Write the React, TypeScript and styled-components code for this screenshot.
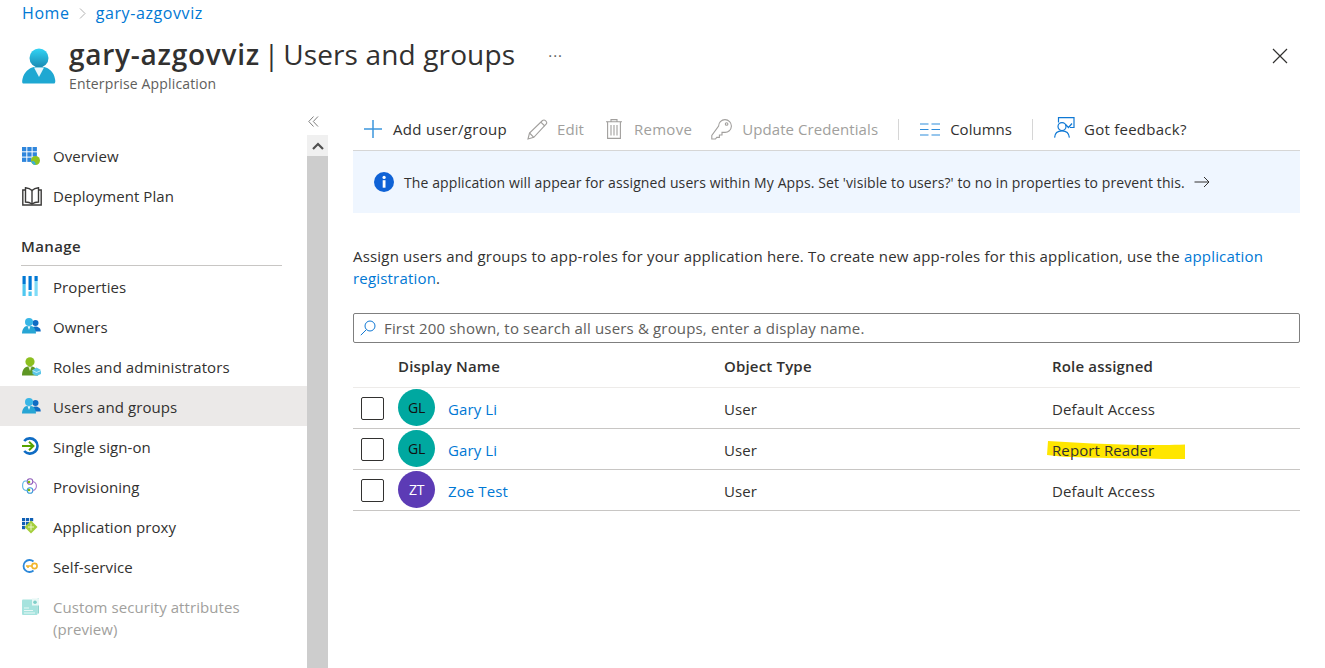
import React from "react";
import styled, { createGlobalStyle } from "styled-components";

const GlobalStyle = createGlobalStyle`
    html, body {
        margin: 0;
        padding: 0;
        background: #fff;
        overflow: hidden;
    }
    body {
        font-family: "Open Sans", "Noto Sans", sans-serif;
        font-size: 15px;
        color: #323130;
    }
    * { box-sizing: border-box; }
`;

/* Icons ---------------- */

const PersonIcon = () => (
    <svg width="34" height="36" viewBox="0 0 34 36">
        <defs>
            <linearGradient id="pHead" x1="0" y1="0" x2="0" y2="1">
                <stop offset="0" stopColor="#32d4f5" />
                <stop offset="1" stopColor="#198ab3" />
            </linearGradient>
        </defs>
        <circle cx="17" cy="10" r="9.5" fill="url(#pHead)" />
        <path d="M1 35.5 C0 35.5 0 33 0.5 31 C2 24 7 20 12 19 L22 19 C27 20 32 24 33 31 C33.5 33 33.5 35.5 32 35.5 Z" fill="#1fa8d2" />
        <path d="M12 19.5 L22 19.5 L17 29 Z" fill="#e9f6fb" />
    </svg>
);

const OverviewIcon = () => (
    <svg width="19" height="19" viewBox="0 0 19 19">
        <g fill="#2f86dc">
            <rect x="0" y="0" width="4.3" height="4.3" />
            <rect x="5.3" y="0" width="4.3" height="4.3" />
            <rect x="10.6" y="0" width="4.3" height="4.3" />
            <rect x="0" y="5.3" width="4.3" height="4.3" />
            <rect x="5.3" y="5.3" width="4.3" height="4.3" />
            <rect x="10.6" y="5.3" width="4.3" height="4.3" />
            <rect x="0" y="10.6" width="4.3" height="4.3" />
            <rect x="5.3" y="10.6" width="4.3" height="4.3" />
        </g>
        <circle cx="13.5" cy="13.5" r="4.5" fill="#8fc31f" />
        <path d="M9.2 14.5 C10 16.5 11.5 18 13.5 18 C14 16.5 13 15 11.5 14 Z" fill="#3ab0d8" />
    </svg>
);

const BookIcon = () => (
    <svg width="20" height="19" viewBox="0 0 20 19" fill="none" stroke="#3b3a39" strokeWidth="1.4">
        <path d="M10 3.5 C8 1.5 6 1 3.5 0.8 L3.5 15 C6 15 8 15.5 10 17 C12 15.5 14 15 16.5 15 L16.5 0.8 C14 1 12 1.5 10 3.5 Z" />
        <path d="M10 3.5 L10 17" />
        <path d="M3.5 3 L0.8 3 L0.8 18 L19.2 18 L19.2 3 L16.5 3" />
    </svg>
);

const PropertiesIcon = () => (
    <svg width="16" height="20" viewBox="0 0 16 20">
        <rect x="0.5" y="0" width="3.2" height="8" fill="#0078d4" />
        <rect x="0.5" y="8" width="3.2" height="12" fill="#50c8f0" />
        <rect x="6.5" y="0" width="3.2" height="14" fill="#0078d4" />
        <rect x="6.5" y="15.5" width="3.2" height="4.5" fill="#50c8f0" />
        <rect x="12.5" y="0" width="3.2" height="5" fill="#0078d4" />
        <rect x="12.5" y="5" width="3.2" height="15" fill="#7fdcf7" />
    </svg>
);

const PeopleIcon = () => (
    <svg width="19" height="16" viewBox="0 0 19 16">
        <circle cx="13.5" cy="5" r="3" fill="#0f6cc4" />
        <path d="M9 13 C9 10 11 8.5 13.5 8.5 C16 8.5 18.7 10 18.7 13 L18.7 13.5 L9 13.5 Z" fill="#0f6cc4" />
        <circle cx="7" cy="4" r="4" fill="#38b6e6" />
        <path d="M0 15.5 C0 11 2.5 8.2 5 8 L9 8 C11.5 8.2 14 11 14 15.5 Z" fill="#27a5d4" />
        <path d="M5.5 8.2 L8.5 8.2 L7 12 Z" fill="#e9f6fb" />
    </svg>
);

const RolesIcon = () => (
    <svg width="19" height="19" viewBox="0 0 19 19">
        <circle cx="8" cy="4.8" r="4.6" fill="#8cbf1f" />
        <path d="M0 18.5 C0 13 2.5 10 6 9.6 L10 9.6 C13 10 15.5 13 16 18.5 Z" fill="#5e9624" />
        <path d="M6.5 10 L9.5 10 L8 14 Z" fill="#e2f0c8" />
        <path d="M14.5 10.5 L19 13 L19 17 L14.5 19 L10.5 17 L10.5 13 Z" fill="#5cc6e8" />
        <path d="M10.5 13 L14.5 15 L19 13 L19 14 L14.5 16 L10.5 14 Z" fill="#c2eefa" />
    </svg>
);

const SsoIcon = () => (
    <svg width="18" height="18" viewBox="0 0 18 18" fill="none">
        <path d="M2.2 4 A7.6 7.6 0 1 1 2.2 14" stroke="#0f6cc4" strokeWidth="2.6" />
        <path d="M0 9 L11 9" stroke="#57a300" strokeWidth="2" />
        <path d="M7 4.8 L11.4 9 L7 13.2" stroke="#57a300" strokeWidth="2" />
    </svg>
);

const ProvisioningIcon = () => (
    <svg width="15" height="16" viewBox="0 0 15 16" fill="none" strokeWidth="1.1">
        <circle cx="8" cy="3.5" r="2.8" stroke="#8e5bb8" />
        <circle cx="8" cy="12.5" r="2.8" stroke="#3a9ad9" />
        <path d="M5.5 3 L3.5 3 C1.5 3 0.6 5 0.6 8 C0.6 11 2 12.5 5 12.5" stroke="#58b4e6" />
        <path d="M10.8 3.5 C13 4 14.4 6 14.4 8 C14.4 10.5 13 12 10.8 12.5" stroke="#a877cf" />
        <circle cx="7" cy="4" r="1.3" fill="#7fba00" />
        <circle cx="7" cy="12" r="1.3" fill="#7fba00" />
    </svg>
);

const ProxyIcon = () => (
    <svg width="16" height="16" viewBox="0 0 16 16">
        <g fill="#0f5fb4">
            <rect x="0" y="0" width="3.2" height="3.2" />
            <rect x="4" y="0" width="3.2" height="3.2" />
            <rect x="8" y="0" width="3.2" height="3.2" />
            <rect x="0" y="4" width="3.2" height="3.2" />
            <rect x="4" y="4" width="3.2" height="3.2" />
            <rect x="0" y="8" width="3.2" height="3.2" />
        </g>
        <path d="M9 2.5 L15.5 9 L9 15.5 L2.5 9 Z" fill="#a4cf3c" />
        <path d="M9 5.5 L9 12.5 M6 9 L12 9" stroke="#eaf5c9" strokeWidth="1" />
    </svg>
);

const SelfServiceIcon = () => (
    <svg width="16" height="14" viewBox="0 0 16 14" fill="none">
        <path d="M11.5 2.5 A6 6 0 1 0 11.5 11.5" stroke="#2c88d9" strokeWidth="1.8" />
        <path d="M4 7 L10 7 M6 7 L6 9" stroke="#f2b52c" strokeWidth="1.6" />
        <circle cx="12.5" cy="7" r="2.6" stroke="#f2b52c" strokeWidth="1.6" />
    </svg>
);

const CustomAttrIcon = () => (
    <svg width="17" height="17" viewBox="0 0 17 17">
        <rect x="0" y="1.5" width="15.5" height="15.5" rx="1" fill="#a6e3de" />
        <rect x="15.5" y="0.5" width="1.5" height="15" fill="#8ed3cd" />
        <rect x="10" y="0.5" width="7" height="7" fill="#e8f8f6" />
        <circle cx="13" cy="4.2" r="1.8" fill="#7fcfc8" />
        <path d="M2 10 L7 10 M2 12.5 L11 12.5 M2 15 L13 15" stroke="#e8f8f6" strokeWidth="1" />
    </svg>
);

const PlusIcon = () => (
    <svg width="20" height="20" viewBox="0 0 20 20" stroke="#3c96dd" strokeWidth="1.5" fill="none">
        <path d="M10 1 L10 19 M1 10 L19 10" />
    </svg>
);

const EditIcon = () => (
    <svg width="21" height="21" viewBox="0 0 21 21" fill="none" stroke="#a19f9d" strokeWidth="1.1">
        <path d="M1 20 L2.5 14 L15.5 1.5 C16.5 0.7 17.5 0.7 18.7 1.8 C20 3 20 4 19.3 5 L6.8 18.3 Z" />
        <path d="M2.5 14 L6.8 18.3 M13.8 3.2 L17.8 7" />
    </svg>
);

const TrashIcon = () => (
    <svg width="16" height="20" viewBox="0 0 16 20" fill="none" stroke="#a19f9d" strokeWidth="1.1">
        <path d="M0 2.8 L16 2.8 M5 2.8 L5 0.6 L11 0.6 L11 2.8" />
        <path d="M1.6 2.8 L1.6 19.4 L14.4 19.4 L14.4 2.8" />
        <path d="M5 6 L5 16.5 M8 6 L8 16.5 M11 6 L11 16.5" />
    </svg>
);

const KeyIcon = () => (
    <svg width="21" height="21" viewBox="0 0 21 21" fill="none" stroke="#a19f9d" strokeWidth="1.1">
        <path d="M7.6 7.2 A6.4 6.4 0 1 1 13.6 13.4 L11 13.4 L11 16 L8.4 16 L8.4 18.4 L5.8 18.4 L4.4 20 L0.8 20 L0.8 16.4 Z" />
        <circle cx="15.6" cy="5" r="1.3" />
    </svg>
);

const ColumnsIcon = () => (
    <svg width="20" height="13" viewBox="0 0 20 13" stroke="#2f8ddb" strokeWidth="1.2" fill="none">
        <path d="M0 1 L8.5 1 M0 6.5 L8.5 6.5 M0 12 L8.5 12 M11.5 1 L20 1 M11.5 6.5 L20 6.5 M11.5 12 L20 12" />
    </svg>
);

const FeedbackSvg = styled.svg`
    margin-bottom: 3px;
`;

const FeedbackIcon = () => (
    <FeedbackSvg width="21" height="21" viewBox="0 0 21 21" fill="none" stroke="#0f78d4" strokeWidth="1.2">
        <path d="M4.5 5.4 L4.5 0.7 L20 0.7 L20 10.5 L16 10.5" />
        <path d="M11.5 7.5 L14.5 10.5 L18 6.5" />
        <circle cx="8" cy="9.6" r="4" />
        <path d="M0.6 20.6 C0.8 16.4 3.6 13.8 8 13.8 C12.4 13.8 15 16.4 15.4 20.6" />
    </FeedbackSvg>
);

const InfoIcon = () => (
    <svg width="20" height="20" viewBox="0 0 20 20">
        <circle cx="10" cy="10" r="10" fill="#0f62d6" />
        <rect x="8.7" y="8.2" width="2.8" height="7.5" fill="#fff" />
        <circle cx="10.1" cy="5.4" r="1.6" fill="#fff" />
    </svg>
);

const ArrowIcon = () => (
    <svg width="16" height="12" viewBox="0 0 16 12" fill="none" stroke="#323130" strokeWidth="1">
        <path d="M0.5 6 L15 6 M10 1 L15 6 L10 11" />
    </svg>
);

const SearchIcon = () => (
    <svg width="16" height="16" viewBox="0 0 16 16" fill="none" stroke="#0f78d4" strokeWidth="1">
        <circle cx="10" cy="6" r="5" />
        <path d="M6.4 9.6 L0.8 15.2" />
    </svg>
);

const CloseIcon = () => (
    <svg width="16" height="16" viewBox="0 0 16 16" stroke="#323130" strokeWidth="1.2" fill="none">
        <path d="M1 1 L15 15 M15 1 L1 15" />
    </svg>
);

const ChevronIcon = () => (
    <svg width="12" height="8" viewBox="0 0 12 8" stroke="#505050" strokeWidth="2.2" fill="none">
        <path d="M1 7 L6 2 L11 7" />
    </svg>
);

const CollapseIcon = () => (
    <svg width="11" height="11" viewBox="0 0 11 11" stroke="#707070" strokeWidth="0.9" fill="none">
        <path d="M5.5 0.5 L0.8 5.5 L5.5 10.5 M10 0.5 L5.3 5.5 L10 10.5" />
    </svg>
);

/* Page ---------------- */

const Page = styled.div`
    width: 1325px;
    height: 668px;
    display: flex;
    flex-direction: column;
    overflow: hidden;
`;

const Breadcrumb = styled.nav`
    height: 26px;
    padding-left: 22px;
    display: flex;
    align-items: center;
    font-size: 16px;
    letter-spacing: 0.6px;
    color: #0078d4;

    svg { margin: 0 10px 0 9px; }
`;

const Header = styled.header`
    height: 70px;
    padding: 0 37px 0 22px;
    display: flex;
    align-items: flex-start;
`;

const HeaderIcon = styled.div`
    width: 47px;
    padding-top: 22px;
`;

const TitleBlock = styled.div`
    display: flex;
    flex-direction: column;
`;

const Title = styled.h1`
    margin: 9px 0 0;
    font-size: 28px;
    line-height: 38px;
    font-weight: 400;
    letter-spacing: 0.14px;
    white-space: nowrap;

    b { font-weight: 600; letter-spacing: 0.75px; }
    span { word-spacing: -3.6px; }
`;

const Subtitle = styled.div`
    font-size: 14px;
    line-height: 18px;
    margin-top: 2px;
    color: #605e5c;
    letter-spacing: 0.15px;
`;

const More = styled.div`
    margin: 19px 0 0 33px;
    font-size: 15px;
    line-height: 20px;
    letter-spacing: 1px;
    color: #605e5c;
`;

const CloseButton = styled.div`
    margin: 22px 0 0 auto;
    height: 16px;
`;

const Body = styled.div`
    flex: 1;
    display: flex;
    min-height: 0;
`;

const Sidebar = styled.aside`
    width: 307px;
    padding-top: 40px;
    flex: none;
`;

const NavItem = styled.div<{ $selected?: boolean; $disabled?: boolean; $tall?: boolean }>`
    min-height: 40px;
    padding: ${(p) => (p.$tall ? "10px 0 0 22px" : "0 0 0 22px")};
    display: flex;
    align-items: ${(p) => (p.$tall ? "flex-start" : "center")};
    background: ${(p) => (p.$selected ? "#ebe9e8" : "transparent")};
    color: ${(p) => (p.$disabled ? "#a19f9d" : "#323130")};
    font-size: 15px;
    line-height: 22px;
    letter-spacing: 0.07px;

    svg { margin-top: ${(p) => (p.$tall ? "2px" : "0")}; }
`;

const NavIcon = styled.span`
    width: 31px;
    flex: none;
    display: flex;
    align-items: center;
`;

const NavLabel = styled.span<{ $low?: boolean }>`
    width: 220px;
    padding-top: ${(p) => (p.$low ? "2px" : "0")};
`;

const SectionTitle = styled.div`
    margin: 20px 25px 0 21px;
    height: 30px;
    border-bottom: 1px solid #c8c6c4;
    font-size: 15px;
    font-weight: 600;
    line-height: 21px;
    letter-spacing: 0.4px;
`;

const ScrollColumn = styled.div`
    width: 21px;
    flex: none;
    display: flex;
    flex-direction: column;
`;

const CollapseButton = styled.div`
    height: 39px;
    padding: 20px 0 0 1px;
    display: flex;
    align-items: flex-start;
`;

const ScrollArrow = styled.div`
    height: 21px;
    background: #f0f0f0;
    display: flex;
    align-items: center;
    justify-content: center;
`;

const ScrollThumb = styled.div`
    flex: 1;
    background: #cdcdcd;
`;

const Main = styled.main`
    width: 947px;
    margin-left: 25px;
    flex: none;
`;

const Toolbar = styled.div`
    height: 55px;
    padding-top: 12px;
    border-bottom: 1px solid #d6d6d6;
    display: flex;
    align-items: center;
    font-size: 15px;
`;

const ToolButton = styled.div<{ $disabled?: boolean; $gap: number; $left: number; $track: number }>`
    display: flex;
    align-items: center;
    margin-left: ${(p) => p.$left}px;
    gap: ${(p) => p.$gap}px;
    color: ${(p) => (p.$disabled ? "#a19f9d" : "#323130")};
    letter-spacing: ${(p) => p.$track}px;
    white-space: nowrap;
`;

const ToolDivider = styled.div<{ $left: number }>`
    width: 1px;
    height: 21px;
    margin-left: ${(p) => p.$left}px;
    background: #d6d6d6;
`;

const Banner = styled.div`
    height: 62px;
    padding-left: 21px;
    background: #eff6ff;
    display: flex;
    align-items: center;
    gap: 10px;
    font-size: 14px;
    letter-spacing: 0.1px;

    svg:last-child { margin-left: -1px; }
`;

const Description = styled.p`
    margin: 32px 0 0;
    font-size: 15px;
    line-height: 22px;
    letter-spacing: 0.185px;

    a { color: #0078d4; text-decoration: none; }
`;

const SearchBox = styled.div`
    margin-top: 24px;
    height: 30px;
    padding-left: 6px;
    border: 1px solid #7f7f7f;
    border-radius: 2px;
    display: flex;
    align-items: center;
    gap: 8px;
    font-size: 15px;
    letter-spacing: 0.16px;
    color: #605e5c;
`;

const Row = styled.div<{ $head?: boolean }>`
    height: ${(p) => (p.$head ? "45px" : "41px")};
    padding-top: ${(p) => (p.$head ? "2px" : "1px")};
    display: grid;
    grid-template-columns: 45px 326px 328px 1fr;
    align-items: center;
    border-bottom: 1px solid ${(p) => (p.$head ? "#edebe9" : "#c8c6c4")};
    font-size: 15px;
    letter-spacing: ${(p) => (p.$head ? "0.18px" : "0.1px")};
    font-weight: ${(p) => (p.$head ? 600 : 400)};
`;

const CheckCell = styled.div`
    padding-left: 8px;
    padding-bottom: 1px;
    display: flex;
`;

const Checkbox = styled.div`
    width: 23px;
    height: 23px;
    border: 1px solid #323130;
    border-radius: 2px;
`;

const NameCell = styled.div`
    display: flex;
    align-items: center;
    gap: 13px;
    color: #0078d4;
`;

const Avatar = styled.div<{ $bg: string; $fg: string }>`
    width: 37px;
    height: 37px;
    margin-bottom: 2px;
    border-radius: 50%;
    background: ${(p) => p.$bg};
    color: ${(p) => p.$fg};
    display: flex;
    align-items: center;
    justify-content: center;
    font-size: 14px;
    letter-spacing: -0.3px;
`;

const RoleCell = styled.div`
    position: relative;
`;

const RoleText = styled.span`
    position: relative;
`;

const Highlight = styled.svg`
    position: absolute;
    left: -5px;
    top: 0;
`;

const navTop = [
    { label: "Overview", icon: <OverviewIcon /> },
    { label: "Deployment Plan", icon: <BookIcon /> },
];

const navManage = [
    { label: "Properties", icon: <PropertiesIcon /> },
    { label: "Owners", icon: <PeopleIcon /> },
    { label: "Roles and administrators", icon: <RolesIcon /> },
    { label: "Users and groups", icon: <PeopleIcon />, selected: true },
    { label: "Single sign-on", icon: <SsoIcon /> },
    { label: "Provisioning", icon: <ProvisioningIcon /> },
    { label: "Application proxy", icon: <ProxyIcon /> },
    { label: "Self-service", icon: <SelfServiceIcon /> },
];

const users = [
    { initials: "GL", name: "Gary Li", bg: "#00a8a0", fg: "#111", role: "Default Access" },
    { initials: "GL", name: "Gary Li", bg: "#00a8a0", fg: "#111", role: "Report Reader", marked: true },
    { initials: "ZT", name: "Zoe Test", bg: "#5c3bb5", fg: "#fff", role: "Default Access" },
];

export default function App() {
    return (
        <Page>
            <GlobalStyle />
            <Breadcrumb>
                Home
                <svg width="7" height="11" viewBox="0 0 7 11" fill="none" stroke="#b0b0b0" strokeWidth="1">
                    <path d="M1 0.5 L6 5.5 L1 10.5" />
                </svg>
                gary-azgovviz
            </Breadcrumb>
            <Header>
                <HeaderIcon><PersonIcon /></HeaderIcon>
                <TitleBlock>
                    <Title><b>gary-azgovviz</b><span> | </span>Users and groups</Title>
                    <Subtitle>Enterprise Application</Subtitle>
                </TitleBlock>
                <More>···</More>
                <CloseButton><CloseIcon /></CloseButton>
            </Header>
            <Body>
                <Sidebar>
                    {navTop.map((item) => (
                        <NavItem key={item.label}>
                            <NavIcon>{item.icon}</NavIcon>
                            <NavLabel>{item.label}</NavLabel>
                        </NavItem>
                    ))}
                    <SectionTitle>Manage</SectionTitle>
                    {navManage.map((item) => (
                        <NavItem key={item.label} $selected={item.selected}>
                            <NavIcon>{item.icon}</NavIcon>
                            <NavLabel $low>{item.label}</NavLabel>
                        </NavItem>
                    ))}
                    <NavItem $disabled $tall>
                        <NavIcon><CustomAttrIcon /></NavIcon>
                        <NavLabel>Custom security attributes (preview)</NavLabel>
                    </NavItem>
                </Sidebar>
                <ScrollColumn>
                    <CollapseButton><CollapseIcon /></CollapseButton>
                    <ScrollArrow><ChevronIcon /></ScrollArrow>
                    <ScrollThumb />
                </ScrollColumn>
                <Main>
                    <Toolbar>
                        <ToolButton $left={10} $gap={10} $track={0.3}><PlusIcon />Add user/group</ToolButton>
                        <ToolButton $left={20} $gap={9} $track={0.05} $disabled><EditIcon />Edit</ToolButton>
                        <ToolButton $left={22} $gap={12} $track={0.3} $disabled><TrashIcon />Remove</ToolButton>
                        <ToolButton $left={19} $gap={10} $track={0.08} $disabled><KeyIcon />Update Credentials</ToolButton>
                        <ToolDivider $left={20} />
                        <ToolButton $left={21} $gap={10} $track={0.02}><ColumnsIcon />Columns</ToolButton>
                        <ToolDivider $left={20} />
                        <ToolButton $left={21} $gap={9} $track={0.26}><FeedbackIcon />Got feedback?</ToolButton>
                    </Toolbar>
                    <Banner>
                        <InfoIcon />
                        <span>The application will appear for assigned users within My Apps. Set 'visible to users?' to no in properties to prevent this.</span>
                        <ArrowIcon />
                    </Banner>
                    <Description>
                        Assign users and groups to app-roles for your application here. To create new app-roles for this application, use the <a>application</a> <a>registration</a>.
                    </Description>
                    <SearchBox>
                        <SearchIcon />
                        First 200 shown, to search all users &amp; groups, enter a display name.
                    </SearchBox>
                    <Row $head>
                        <span />
                        <span>Display Name</span>
                        <span>Object Type</span>
                        <span>Role assigned</span>
                    </Row>
                    {users.map((user, i) => (
                        <Row key={i}>
                            <CheckCell><Checkbox /></CheckCell>
                            <NameCell>
                                <Avatar $bg={user.bg} $fg={user.fg}>{user.initials}</Avatar>
                                {user.name}
                            </NameCell>
                            <span>User</span>
                            <RoleCell>
                                {user.marked && (
                                    <Highlight width="139" height="20" viewBox="0 0 139 20">
                                        <path d="M1 1 C30 3 60 4 90 5 C110 5 125 5 138 4.5 L138 19 C100 19 50 18 20 17 C12 16 6 16 0 15 Z" fill="#ffe600" />
                                    </Highlight>
                                )}
                                <RoleText>{user.role}</RoleText>
                            </RoleCell>
                        </Row>
                    ))}
                </Main>
            </Body>
        </Page>
    );
}
